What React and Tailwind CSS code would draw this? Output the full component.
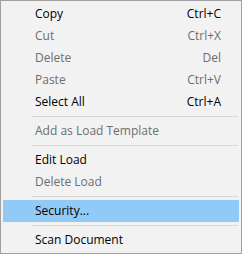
const items = [
  { label: 'Copy', shortcut: 'Ctrl+C' },
  { label: 'Cut', shortcut: 'Ctrl+X', disabled: true },
  { label: 'Delete', shortcut: 'Del', disabled: true },
  { label: 'Paste', shortcut: 'Ctrl+V', disabled: true },
  { label: 'Select All', shortcut: 'Ctrl+A' },
  { sep: true },
  { label: 'Add as Load Template', disabled: true },
  { sep: true },
  { label: 'Edit Load' },
  { label: 'Delete Load', disabled: true },
  { sep: true },
  { label: 'Security...', active: true },
  { sep: true },
  { label: 'Scan Document' },
];

function MenuItem({ item }) {
  if (item.sep) {
    return (
      <div className="h-[7px] flex items-center pl-[29px] pr-[1px]">
        <div className="h-px w-full bg-[#d7d7d7]" />
      </div>
    );
  }
  return (
    <div
      className={`h-[22px] flex items-center pl-[32px] pr-[18px] ${
        item.active ? 'bg-[#91c9f7]' : ''
      } ${item.disabled ? 'text-[#6d6d6d]' : 'text-black'}`}
    >
      <span className="flex-1">{item.label}</span>
      {item.shortcut && <span>{item.shortcut}</span>}
    </div>
  );
}

export default function App() {
  return (
    <div className="w-[242px] h-[254px] bg-[#f2f2f2] border border-[#a0a0a0] p-[2px] text-[12px] leading-none font-['Open_Sans','Noto_Sans',sans-serif]">
      {items.map((item, i) => (
        <MenuItem key={i} item={item} />
      ))}
    </div>
  );
}
